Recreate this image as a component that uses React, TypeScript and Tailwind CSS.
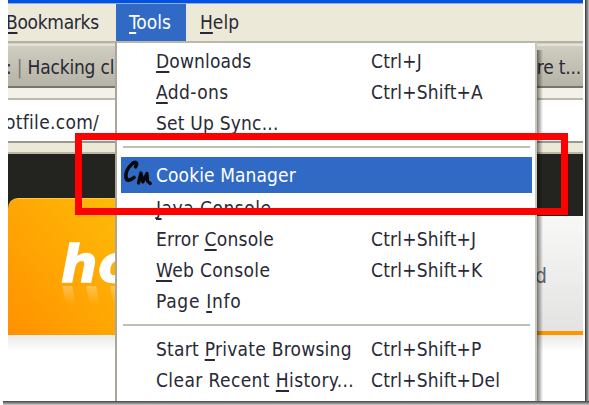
import type { ReactNode } from "react";

const font = "font-['DejaVu_Sans_Condensed','DejaVu_Sans',sans-serif] font-stretch-condensed";

function U({ children }: { children: ReactNode }) {
  return <span className="underline decoration-2 underline-offset-[3px] [text-decoration-skip-ink:none]">{children}</span>;
}

function Item({ children, keys, track }: { children: ReactNode; keys?: string; track: string }) {
  return (
    <div className="flex h-[31px] shrink-0 items-center pl-[39px]">
      <span className={`w-[215px] ${track}`}>{children}</span>
      <span className="tracking-[0.2px]">{keys}</span>
    </div>
  );
}

function CookieIcon() {
  return (
    <svg width="32" height="36" viewBox="0 0 32 36" fill="none" stroke="#05070b" strokeLinecap="round" strokeLinejoin="round">
      <path d="M14.5 9.8 C17.5 5 14 4.2 11 7 C7 10.5 4.2 16 5 20.5 C5.6 24.5 9.5 23.5 13 20.5" strokeWidth="3.6" />
      <path d="M17.5 26 L20 16 L21.8 25 L26 16.5 L26.5 24 L29.3 26.5" strokeWidth="3.3" />
    </svg>
  );
}

function Separator() {
  return (
    <div className="shrink-0 pt-[7px] pr-[5px] pl-[6px]">
      <div className="h-[2px] bg-[#c1beb2]" />
    </div>
  );
}

export default function App() {
  return (
    <div className={`relative h-[405px] w-[589px] overflow-hidden bg-white text-[19px] leading-none whitespace-nowrap text-[#292936] ${font}`}>
      <div className="ml-2 flex h-[401px] w-[575px] flex-col overflow-hidden">
        <div className="h-1 shrink-0 border-b border-[#93acd6] bg-[#0052e2]" />
        <div className="flex h-[37px] shrink-0 bg-[#ece9d8]">
          <div className="flex w-[108px] items-center tracking-[-0.3px]"><span className="-ml-[2px]"><U>B</U>ookmarks</span></div>
          <div className="flex w-[70px] items-center bg-[#316ac5] pl-[13px] text-white"><span><U>T</U>ools</span></div>
          <div className="flex items-center pl-[14px]"><span><U>H</U>elp</span></div>
        </div>
        <div className="h-[5px] shrink-0 border-y-2 border-t-[#b4b2a5] border-b-[#e5e3d9] bg-[#d4d2c6]" />
        <div className="flex h-[42px] shrink-0 items-center justify-between border-b-2 border-[#77766e] bg-linear-to-b from-[#cecdc0] to-[#b6b4a6] pt-[2px]">
          <span className="-ml-[2px] tracking-[-0.2px]">: <span className="text-[#777]">|</span> Hacking cl</span>
          <span className="pr-[2px] tracking-[-0.2px]">re t...</span>
        </div>
        <div className="h-[12px] shrink-0 border-b-2 border-[#bcb9ad] bg-[#f3f1e9]" />
        <div className="flex h-[41px] shrink-0 items-center pt-1"><span className="-ml-[3px] tracking-[0.3px]">otfile.com/</span></div>
        <div className="h-[13px] shrink-0 border-t-2 border-b-2 border-t-[#99988f] border-b-[#bbb8a5] bg-[#ece9d8]" />
        <div className="flex h-[181px] shrink-0 justify-between bg-white">
          <div className="flex w-[110px] flex-col bg-[#232320] pt-[44px]">
            <div className="h-[137px] overflow-hidden rounded-tl-[10px] border-t border-[#ffc63e] bg-linear-to-bl from-[#fdbb08] to-[#ff9100] pt-[37px] pl-[53px]">
              <div className="h-[50px] font-['DejaVu_Sans',sans-serif] text-[51px] leading-[58px] font-bold tracking-[1px] text-white italic font-stretch-normal [-webkit-text-stroke:1.5px_white]">ho</div>
              <div className="flex h-[18px] gap-[14px] pl-[3px]">
                <div className="h-full w-[10px] shrink-0 skew-x-12 bg-linear-to-b from-white/30 to-transparent" />
                <div className="h-full w-[10px] shrink-0 skew-x-12 bg-linear-to-b from-white/30 to-transparent" />
                <div className="h-full w-[20px] shrink-0 skew-x-12 bg-linear-to-b from-white/30 to-transparent" />
              </div>
            </div>
          </div>
          <div className="flex w-[60px] flex-col">
            <div className="h-[62px] bg-[#232320]" />
            <div className="flex h-[115px] items-start bg-linear-to-b from-[#f8f8f7] to-[#e3e3e2] pt-[50px] pl-[12px] text-[21px] text-[#606270]">d</div>
            <div className="h-[4px] bg-[#fb9500]" />
          </div>
        </div>
        <div className="h-[16px] shrink-0 bg-linear-to-b from-[#e9e9e8] to-white" />
      </div>

      <div className="absolute top-0 right-0 h-[404px] w-[4px] bg-linear-to-r from-[#393939] via-[#777] to-[#c2c2c2]" />
      <div className="absolute bottom-0 left-[3px] h-[4px] w-[586px] bg-linear-to-b from-[#424543] via-[#858585] to-[#d1d1d1]" />

      <div className="absolute top-[41px] left-[115px] flex h-[360px] w-[422px] flex-col border-t-2 border-r-2 border-l-2 border-t-[#b9b7a9] border-r-[#c9c6ba] border-l-[#aaa798] bg-white pt-[3px]">
        <Item keys="Ctrl+J" track="tracking-[0.15px]"><U>D</U>ownloads</Item>
        <Item keys="Ctrl+Shift+A" track="tracking-[0.4px]"><U>A</U>dd-ons</Item>
        <Item track="tracking-[0.2px]">Set Up S<U>y</U>nc...</Item>
        <div className="h-[18px] shrink-0"><Separator /></div>
        <div className="mr-[3px] ml-[4px] flex h-[36px] shrink-0 items-center bg-[#316ac5] text-white">
          <CookieIcon />
          <span className="ml-[3px] tracking-[0.1px]">Cookie Manager</span>
        </div>
        <Item track="tracking-[0.5px]"><U>J</U>ava Console</Item>
        <Item keys="Ctrl+Shift+J" track="tracking-[0.25px]">Error <U>C</U>onsole</Item>
        <Item keys="Ctrl+Shift+K" track="tracking-[0.35px]"><U>W</U>eb Console</Item>
        <Item track="tracking-[0.7px]">Page <U>I</U>nfo</Item>
        <div className="h-[17px] shrink-0"><Separator /></div>
        <Item keys="Ctrl+Shift+P" track="tracking-[0.25px]">Start <U>P</U>rivate Browsing</Item>
        <Item keys="Ctrl+Shift+Del" track="tracking-[0.4px]">Clear Recent <U>H</U>istory...</Item>
      </div>
      <div className="absolute top-[50px] left-[537px] h-[351px] w-[6px] bg-linear-to-r from-black/50 to-transparent" />
      <div className="absolute top-[133px] left-[75px] h-[82px] w-[493px] border-[7px] border-[#ff0000]" />
    </div>
  );
}
